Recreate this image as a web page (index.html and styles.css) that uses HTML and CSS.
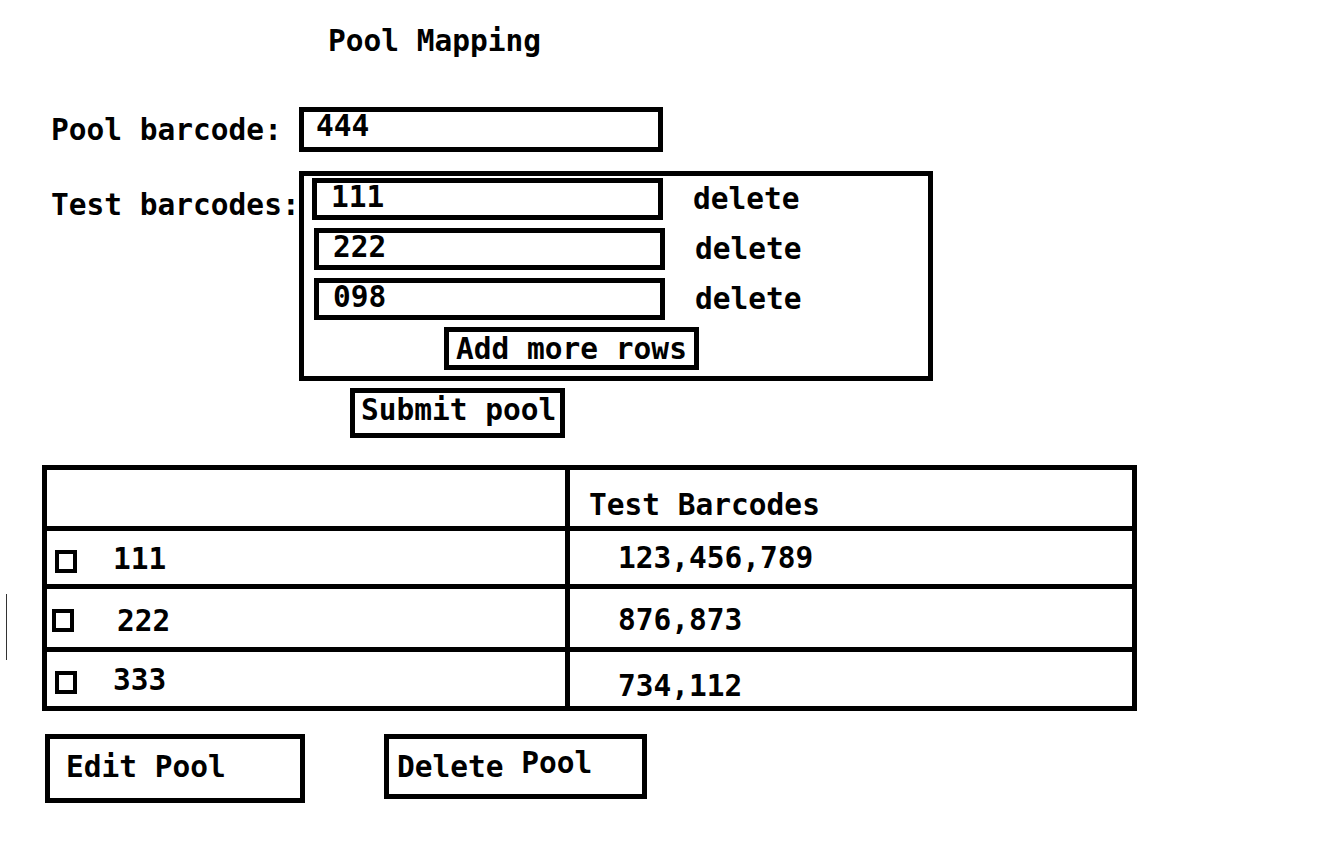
FILE: index.html
```html
<!DOCTYPE html>
<html lang="en">
<head>
    <meta charset="UTF-8">
    <title>Pool Mapping</title>
    <link rel="stylesheet" href="styles.css">
</head>
<body>
    <h1 class="title">Pool Mapping</h1>

    <form class="pool-form">
        <!-- Pool barcode -->
        <div class="field-row">
            <label class="field-label" for="pool-barcode">Pool barcode:</label>
            <input type="text" id="pool-barcode" class="pool-input" value="444">
        </div>

        <!-- Test barcodes -->
        <div class="field-row tests-row">
            <label class="field-label tests-label">Test barcodes:</label>
            <div class="tests-box">
                <div class="test-row first">
                    <input type="text" class="test-input" value="111">
                    <span class="delete-link">delete</span>
                </div>
                <div class="test-row">
                    <input type="text" class="test-input" value="222">
                    <span class="delete-link">delete</span>
                </div>
                <div class="test-row">
                    <input type="text" class="test-input" value="098">
                    <span class="delete-link">delete</span>
                </div>
                <button type="button" class="box-btn add-btn">Add more rows</button>
            </div>
        </div>

        <div class="submit-row">
            <button type="submit" class="box-btn submit-btn">Submit pool</button>
        </div>
    </form>

    <div class="table-area">
        <div class="stray-mark"></div>
        <table class="pool-table">
            <thead>
                <tr>
                    <th class="col-pool"></th>
                    <th class="col-tests">Test Barcodes</th>
                </tr>
            </thead>
            <tbody>
                <tr class="row-a">
                    <td class="col-pool"><span class="check"></span><span class="pool-id">111</span></td>
                    <td class="col-tests">123,456,789</td>
                </tr>
                <tr class="row-b">
                    <td class="col-pool"><span class="check shift"></span><span class="pool-id">222</span></td>
                    <td class="col-tests">876,873</td>
                </tr>
                <tr class="row-c">
                    <td class="col-pool"><span class="check"></span><span class="pool-id">333</span></td>
                    <td class="col-tests">734,112</td>
                </tr>
            </tbody>
        </table>
    </div>

    <div class="actions">
        <button type="button" class="box-btn edit-btn">Edit Pool</button>
        <button type="button" class="box-btn delete-btn">Delete <span class="raised">Pool</span></button>
    </div>
</body>
</html>
```

FILE: styles.css
```css
body {
    margin: 0;
    background: #fff;
    color: #000;
    font-family: "DejaVu Sans Mono", "Liberation Mono", monospace;
    font-size: 29.5px;
    font-weight: bold;
    line-height: 34px;
}

input, button {
    font: inherit;
    color: #000;
    background: #fff;
    box-sizing: border-box;
    margin: 0;
}

.title {
    margin: 0;
    padding: 24px 0 0 328px;
    font-size: inherit;
    line-height: 34px;
}

.field-row {
    display: flex;
    align-items: center;
}

.pool-form > .field-row:first-child {
    margin-top: 49px;
}

.field-label {
    width: 248px;
    padding-left: 51px;
    white-space: nowrap;
}

.pool-input {
    width: 364px;
    height: 45px;
    border: 5px solid #000;
    padding: 0 0 7px 12px;
}

.tests-row {
    margin-top: 19px;
    align-items: flex-start;
}

.tests-label {
    padding-top: 17px;
}

.tests-box {
    width: 634px;
    box-sizing: border-box;
    border: 5px solid #000;
    padding: 2px 0 6px 10px;
}

.test-row {
    display: flex;
    align-items: center;
    gap: 30px;
    margin-top: 8px;
}

.test-row.first {
    margin-top: 0;
    margin-left: -2px;
}

.test-input {
    width: 351px;
    height: 42px;
    border: 5px solid #000;
    padding: 0 0 5px 14px;
}

.delete-link {
    cursor: pointer;
}

.box-btn {
    border: 5px solid #000;
    text-align: left;
    cursor: pointer;
    white-space: nowrap;
}

.add-btn {
    display: block;
    margin: 7px 0 0 130px;
    width: 255px;
    height: 43px;
    padding: 0 0 2px 7px;
}

.submit-row {
    margin-top: 7px;
    padding-left: 350px;
}

.submit-btn {
    width: 215px;
    height: 50px;
    padding: 0 0 8px 6px;
}

.table-area {
    display: flex;
    align-items: flex-start;
    margin-top: 27px;
    padding-left: 6px;
}

.stray-mark {
    width: 1px;
    height: 66px;
    margin: 129px 35px 0 0;
    background: #333;
}

.pool-table {
    border-collapse: separate;
    border-spacing: 0;
    border-top: 5px solid #000;
    border-left: 5px solid #000;
}

.pool-table th,
.pool-table td {
    box-sizing: border-box;
    border-right: 5px solid #000;
    border-bottom: 5px solid #000;
    padding: 0;
    text-align: left;
    font-weight: bold;
    white-space: nowrap;
}

.pool-table th.col-pool,
.pool-table td.col-pool {
    width: 523px;
}

.pool-table th.col-tests,
.pool-table td.col-tests {
    width: 567px;
}

.pool-table thead th {
    height: 61px;
    padding-top: 14px;
}

.pool-table th.col-tests {
    padding-left: 19px;
}

.pool-table td.col-tests {
    padding-left: 48px;
}

.row-a td { height: 58px; }
.row-b td { height: 63px; padding-top: 4px; }
.row-c td { height: 59px; }
.row-c td.col-tests { padding-top: 14px; }

.check {
    display: inline-block;
    vertical-align: middle;
    box-sizing: border-box;
    width: 22px;
    height: 23px;
    border: 4px solid #000;
    margin: 6px 36px 0 8px;
}

.check.shift {
    margin: 0 43px 0 5px;
}

.pool-id {
    vertical-align: middle;
}

.actions {
    display: flex;
    align-items: flex-start;
    gap: 79px;
    margin-top: 23px;
    padding-left: 45px;
}

.edit-btn {
    width: 260px;
    height: 69px;
    padding: 0 0 4px 16px;
}

.delete-btn {
    width: 263px;
    height: 65px;
    padding: 0 0 4px 8px;
}

.raised {
    vertical-align: 4px;
}
```
